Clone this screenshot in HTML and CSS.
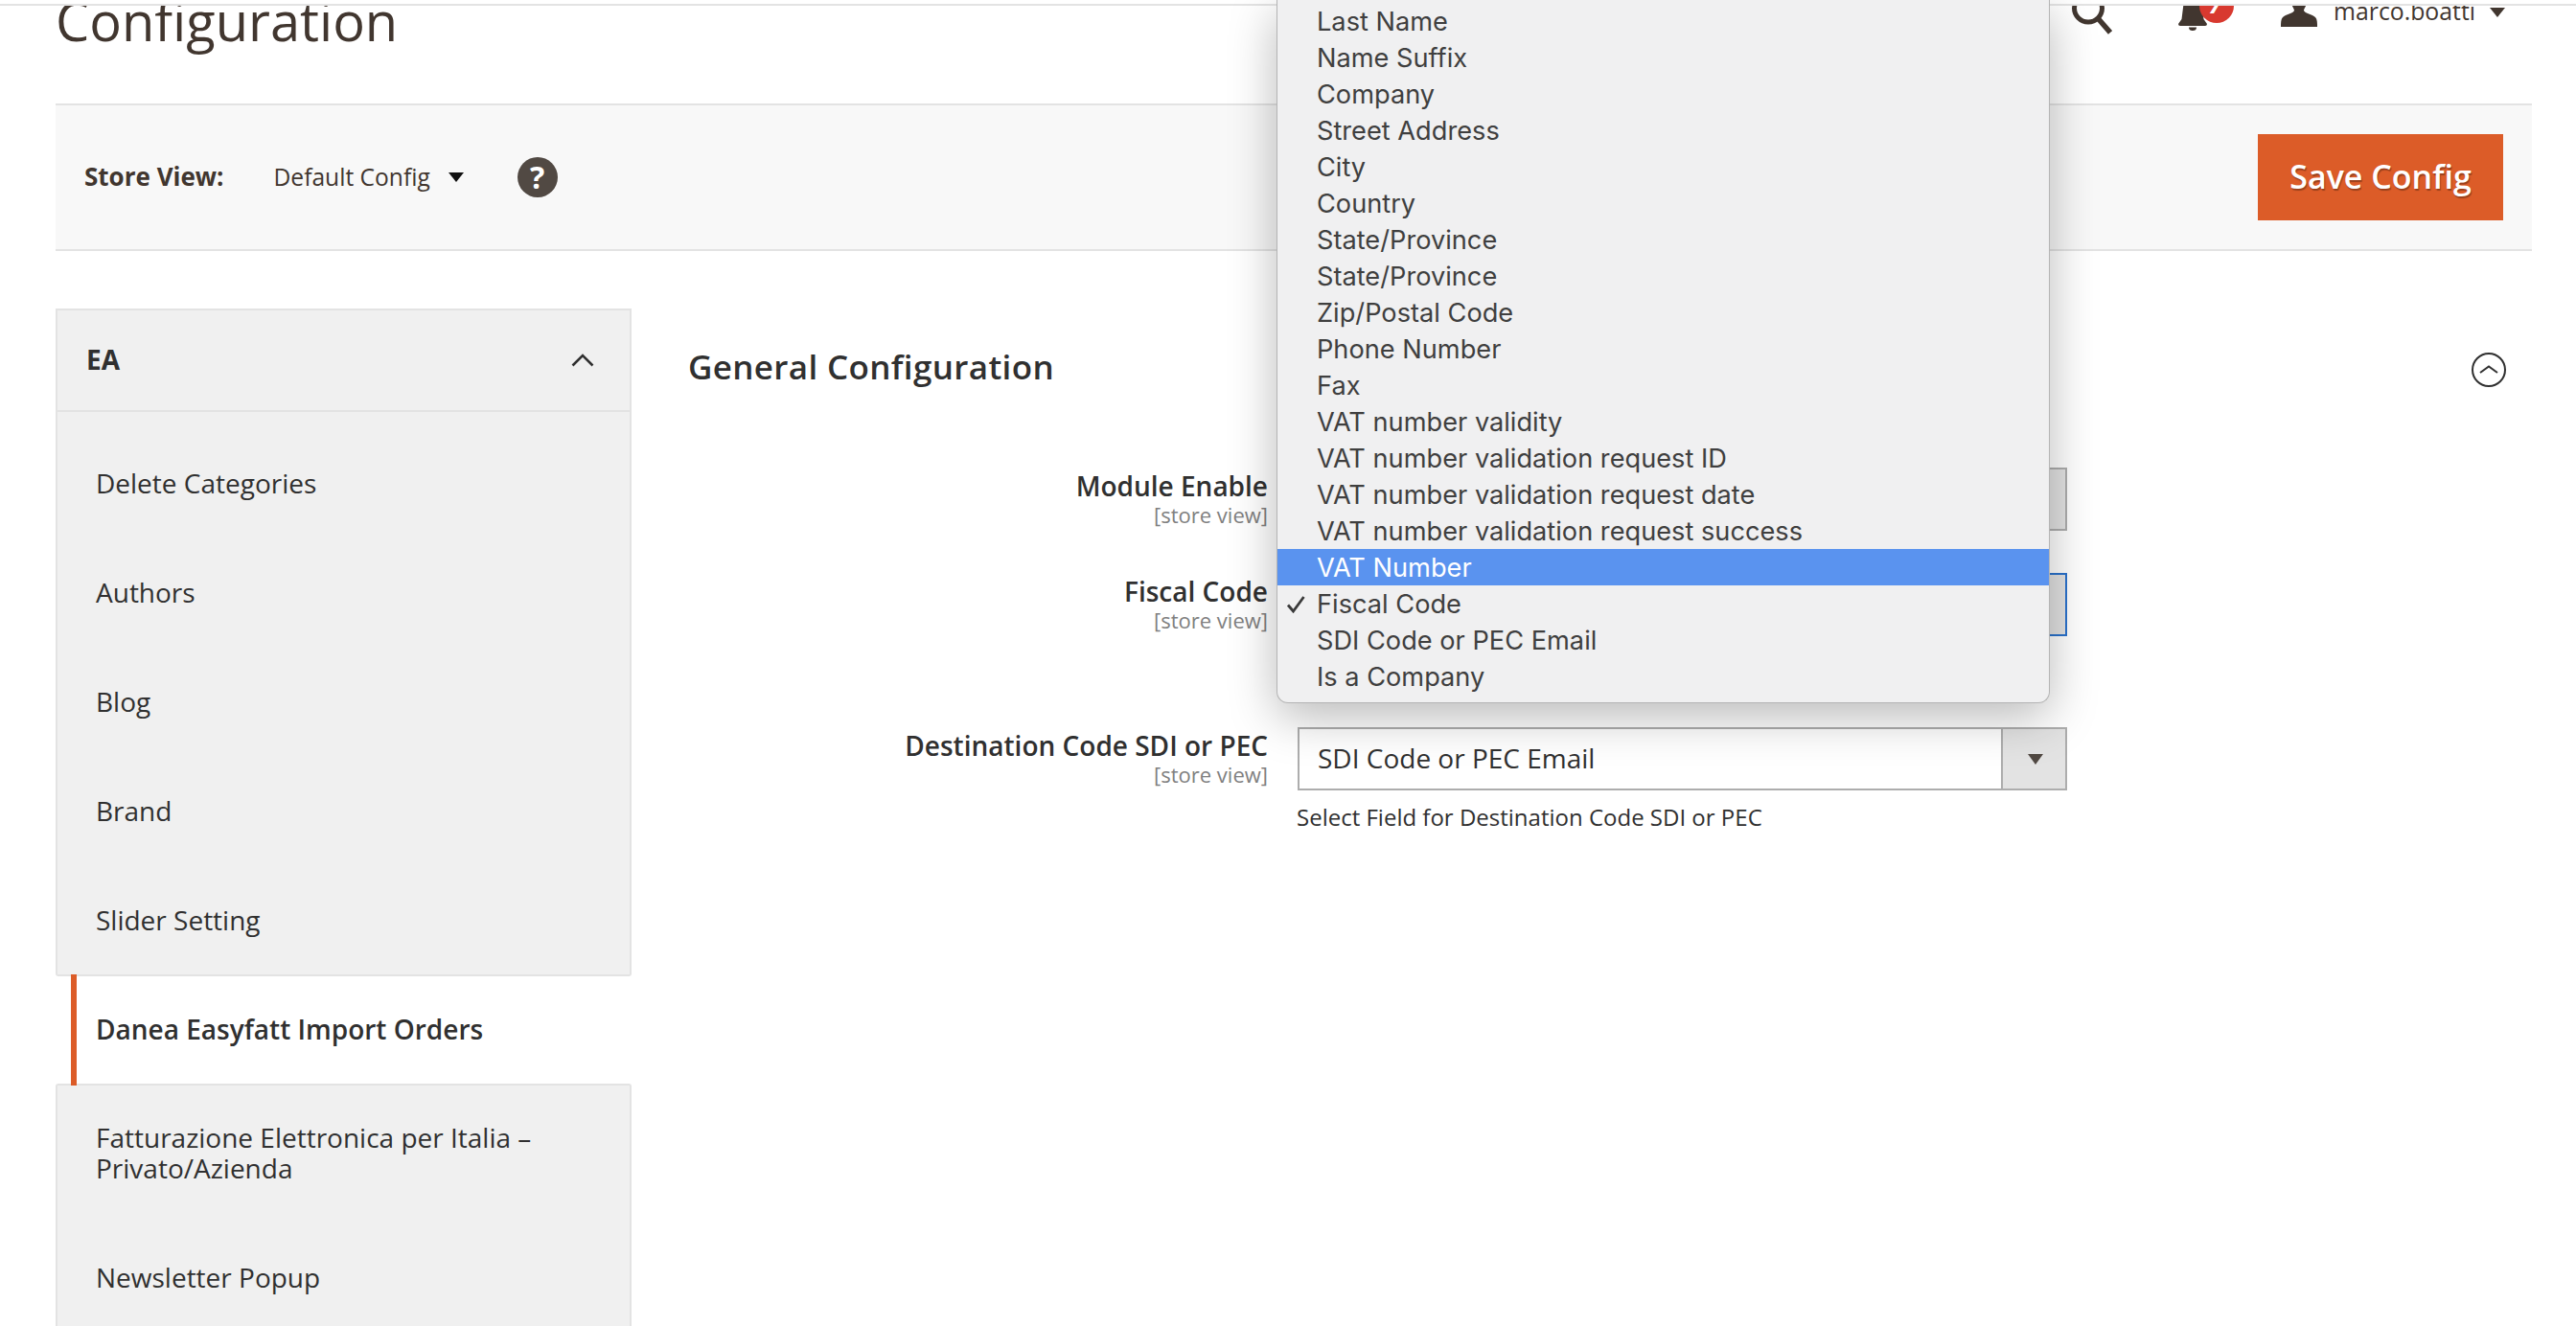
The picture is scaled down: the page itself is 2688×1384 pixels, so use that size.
FILE: index.html
```html
<!DOCTYPE html>
<html lang="en">
<head>
<meta charset="utf-8">
<title>Configuration</title>
<link rel="stylesheet" href="styles.css">
</head>
<body>
<div class="topline"></div>
<div class="page">
  <header class="page-header">
    <h1 class="title">Configuration</h1>
    <div class="tools">
      <svg class="ico-search" width="42" height="36" viewBox="0 0 42 36"><circle cx="17" cy="8.5" r="14.5" fill="none" stroke="#41362f" stroke-width="5"/><path d="M27 19 L40 34" stroke="#41362f" stroke-width="5.5" fill="none"/></svg>
      <svg class="ico-bell" width="60" height="34" viewBox="0 0 60 34"><path d="M6 0 L3.5 20 L0 25 Q0 27 2 27 L28 27 Q30 27 30 25 L26.500 20 L24 0 Z" fill="#41362f"/><path d="M11 28.500 h8 a4 3.500 0 0 1 -8 0 z" fill="#41362f"/><circle cx="40" cy="6" r="18" fill="#d8392f"/><text class="badge-num" x="32" y="14">7</text></svg>
      <svg class="ico-user" width="38" height="30" viewBox="0 0 38 30"><path d="M10 0 C11 6 14 9 14 11 C13 14 5 15 2 18 C0 20 0 24 0 28 L38 28 C38 24 38 20 36 18 C33 15 25 14 24 11 C24 9 27 6 28 0 Z" fill="#41362f"/></svg>
      <span class="user-name">marco.boatti</span>
      <span class="caret-user"></span>
    </div>
  </header>

  <div class="store-bar">
    <span class="store-label">Store View:</span>
    <span class="store-value">Default Config</span>
    <span class="caret-store"></span>
    <span class="help">?</span>
    <button class="save" type="button">Save Config</button>
  </div>

  <div class="columns">
    <aside class="side">
      <div class="side-head">
        <span>EA</span>
        <svg width="24" height="14" viewBox="0 0 24 14"><path d="M1.500 12.500 L12 2 L22.500 12.500" fill="none" stroke="#303030" stroke-width="2.500"/></svg>
      </div>
      <ul class="group group-top">
        <li class="item">Delete Categories</li>
        <li class="item">Authors</li>
        <li class="item">Blog</li>
        <li class="item">Brand</li>
        <li class="item">Slider Setting</li>
      </ul>
      <div class="item-active">Danea Easyfatt Import Orders</div>
      <ul class="group group-bottom">
        <li class="item item-wrap">Fatturazione Elettronica per Italia – Privato/Azienda</li>
        <li class="item">Newsletter Popup</li>
      </ul>
    </aside>

    <main class="main">
      <div class="section-head">
        <h2 class="section-title">General Configuration</h2>
        <svg class="section-toggle" width="36" height="36" viewBox="0 0 36 36"><circle cx="18" cy="18" r="17" fill="none" stroke="#303030" stroke-width="2"/><path d="M9 21 L18 14.500 L27 21" fill="none" stroke="#303030" stroke-width="2"/></svg>
      </div>
      <div class="form">
        <div class="row row-first">
          <div class="label"><span class="label-name">Module Enable</span><span class="scope">[store view]</span></div>
          <div class="field">
            <div class="select"><span class="select-text">Yes</span><span class="select-btn"><span class="caret-select"></span></span></div>
          </div>
        </div>
        <div class="row row-second">
          <div class="label"><span class="label-name">Fiscal Code</span><span class="scope">[store view]</span></div>
          <div class="field">
            <div class="select select-focus"><span class="select-text">Fiscal Code</span><span class="select-btn"><span class="caret-select"></span></span></div>
          </div>
        </div>
        <div class="row">
          <div class="label"><span class="label-name">Destination Code SDI or PEC</span><span class="scope">[store view]</span></div>
          <div class="field">
            <div class="select"><span class="select-text">SDI Code or PEC Email</span><span class="select-btn"><span class="caret-select"></span></span></div>
            <p class="note">Select Field for Destination Code SDI or PEC</p>
          </div>
        </div>
      </div>
    </main>
  </div>
</div>

<ul class="menu">
  <li>Last Name</li>
  <li>Name Suffix</li>
  <li>Company</li>
  <li>Street Address</li>
  <li>City</li>
  <li>Country</li>
  <li>State/Province</li>
  <li>State/Province</li>
  <li>Zip/Postal Code</li>
  <li>Phone Number</li>
  <li>Fax</li>
  <li>VAT number validity</li>
  <li>VAT number validation request ID</li>
  <li>VAT number validation request date</li>
  <li>VAT number validation request success</li>
  <li class="menu-hi">VAT Number</li>
  <li><svg class="check" width="21" height="19" viewBox="0 0 21 19"><path d="M2 10.500 L7.500 17 L18.500 2" fill="none" stroke="#3a3a3a" stroke-width="2.800"/></svg>Fiscal Code</li>
  <li>SDI Code or PEC Email</li>
  <li>Is a Company</li>
</ul>
</body>
</html>
```

FILE: styles.css
```css
* { box-sizing: border-box; }
html, body { margin: 0; padding: 0; height: 1384px; overflow: hidden; background: #fff; }
body { font-family: "Open Sans", sans-serif; color: #303030; position: relative; }
ul { list-style: none; margin: 0; padding: 0; }
h1, h2, p { margin: 0; }

.topline { position: absolute; left: 0; top: 0; width: 100%; height: 6px; background: #fff; border-bottom: 2px solid #e3e3e3; z-index: 2; }

.page { padding: 0 46px 0 58px; }

.page-header { height: 108px; overflow: hidden; display: flex; justify-content: space-between; align-items: flex-start; }
.title { font-size: 56px; font-weight: 400; line-height: 70px; color: #41362f; margin: -14px 0 0 0; }
.tools { display: flex; align-items: flex-start; padding-right: 28px; }
.tools svg { display: block; flex: none; }
.ico-search { margin-right: 69px; }
.ico-bell { margin-right: 47px; }
.ico-user { margin-right: 17px; }
.badge-num { font-family: "Open Sans", sans-serif; font-size: 24px; font-weight: 700; fill: #fff; font-style: italic; }
.user-name { font-size: 24.8px; line-height: 28px; color: #41362f; margin-top: -3px; }
.caret-user { width: 0; height: 0; border-left: 8px solid transparent; border-right: 8px solid transparent; border-top: 10px solid #41362f; margin: 8px 0 0 15px; }

.store-bar { height: 154px; background: #f8f8f8; border-top: 2px solid #e3e3e3; border-bottom: 2px solid #e3e3e3; display: flex; align-items: center; padding: 0 30px; color: #41362f; font-size: 24.6px; }
.store-label { font-size: 26px; font-weight: 700; margin: 0 52px 2px 0; }
.store-value { margin: 0 19px 2px 0; }
.caret-store { width: 0; height: 0; border-left: 8px solid transparent; border-right: 8px solid transparent; border-top: 10px solid #111; margin-right: 56px; }
.help { width: 42px; height: 42px; border-radius: 50%; background: #514943; color: #fff; font-weight: 700; font-size: 32px; line-height: 42px; text-align: center; }
.save { margin-left: auto; width: 256px; height: 90px; border: 0; background: #dc5c28; color: #fff; font-family: inherit; font-size: 34px; font-weight: 600; text-shadow: 1px 2px 1px rgba(0,0,0,.3); padding: 0 0 3px; }

.columns { display: grid; grid-template-columns: 601px 1fr; margin-top: 60px; }

.side { font-size: 28px; }
.side-head { height: 108px; background: #f0f0f0; border: 2px solid #e3e3e3; display: flex; justify-content: space-between; align-items: center; padding: 0 37px 0 30px; font-weight: 700; }
.side-head span { margin-bottom: 2px; }
.group { background: #f0f0f0; border-left: 2px solid #e3e3e3; border-right: 2px solid #e3e3e3; }
.group-top { padding-top: 17px; border-bottom: 2px solid #e3e3e3; border-radius: 0 0 3px 3px; }
.group-bottom { border-top: 2px solid #e3e3e3; border-radius: 3px 3px 0 0; padding-bottom: 20px; }
.item { padding: 41px 40px; line-height: 32px; }
.item-wrap { padding-top: 38px; }
.item-active { height: 116px; margin: -2px 0 -2px 16px; border-left: 6px solid #dc5c28; padding: 0 0 3px 20px; display: flex; align-items: center; font-weight: 600; position: relative; z-index: 1; }

.main { padding: 0 27px 0 59px; }
.section-head { display: flex; justify-content: space-between; align-items: center; margin-top: 42px; height: 40px; }
.section-title { font-size: 35px; font-weight: 600; color: #303030; letter-spacing: .35px; margin-bottom: 4px; }
.section-toggle { margin-top: 4px; }
.form { margin-top: 84px; }
.row { display: grid; grid-template-columns: 605px 803px; column-gap: 31px; }
.row-first { margin-bottom: 44px; }
.row-second { margin-bottom: 95px; }
.label { display: flex; flex-direction: column; align-items: flex-end; }
.label-name { font-size: 28px; font-weight: 600; line-height: 38px; }
.scope { font-size: 22px; color: #808080; line-height: 22px; }
.select { height: 66px; border: 2px solid #adadad; display: flex; justify-content: space-between; align-items: center; background: #fff; }
.select-focus { border-color: #2a72cc; }
.select-text { font-size: 28px; padding-left: 19px; margin-bottom: 2px; color: #303030; }
.select-btn { width: 67px; height: 100%; padding-left: 3px; background: #e3e3e3; border-left: 2px solid #adadad; display: flex; align-items: center; justify-content: center; }
.caret-select { width: 0; height: 0; border-left: 8px solid transparent; border-right: 8px solid transparent; border-top: 11px solid #514943; }
.note { font-size: 24px; line-height: 32px; margin: 12px 0 0 -1px; color: #303030; }

.menu { position: absolute; left: 1332px; top: 0; width: 807px; padding: 3px 0 8px; background: #f0f0f1; border: 1px solid #b4b4b4; border-top: 0; border-radius: 0 0 12px 12px; box-shadow: 0 14px 50px rgba(0,0,0,.28); z-index: 3; font-family: Inter, sans-serif; font-size: 27.2px; color: #3f3f3f; }
.menu li { height: 38px; line-height: 38px; padding: 1px 0 0 41px; display: flex; align-items: center; }
.menu .menu-hi { background: #5a93ef; color: #fff; }
.check { margin-left: -32px; margin-right: 11px; flex: none; }
```
